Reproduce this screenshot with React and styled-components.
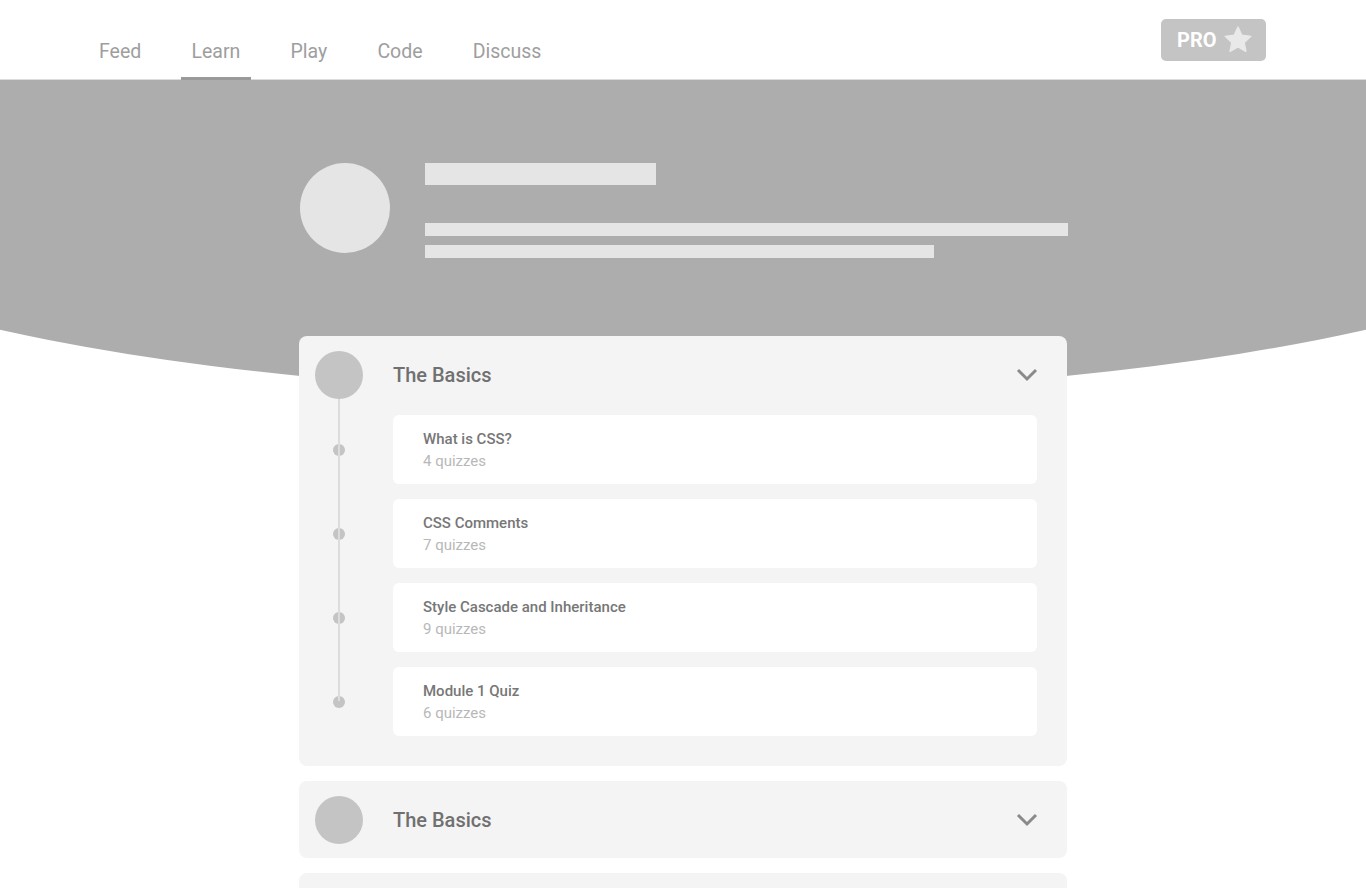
import React from "react";
import styled, { createGlobalStyle } from "styled-components";

const GlobalStyle = createGlobalStyle`
  html, body {
    margin: 0;
    padding: 0;
    background: #ffffff;
    font-family: Roboto, "Noto Sans", Arial, sans-serif;
  }
  * {
    box-sizing: border-box;
  }
`;

const navItems = ["Feed", "Learn", "Play", "Code", "Discuss"];

const lessons = [
  { title: "What is CSS?", quizzes: 4 },
  { title: "CSS Comments", quizzes: 7 },
  { title: "Style Cascade and Inheritance", quizzes: 9 },
  { title: "Module 1 Quiz", quizzes: 6 },
];

function Star() {
  return (
    <svg width="28" height="27" viewBox="0 0 24 23">
      <path
        d="M12 0.8l3.3 7.1 7.7 0.9-5.7 5.3 1.5 7.6L12 17.9l-6.8 3.8 1.5-7.6L1 8.8l7.7-0.9z"
        fill="#e9e9e9"
        strokeLinejoin="round"
        stroke="#e9e9e9"
        strokeWidth="1.2"
      />
    </svg>
  );
}

function Chevron() {
  return (
    <svg width="22" height="14" viewBox="0 0 22 14">
      <polyline
        points="2,2 11,11 20,2"
        fill="none"
        stroke="#8a8a8a"
        strokeWidth="3"
      />
    </svg>
  );
}

function Module({ title, items }) {
  return (
    <ModuleCard $open={!!items}>
      <ModuleHead>
        <ModuleIcon />
        <ModuleTitle>{title}</ModuleTitle>
        <Chevron />
      </ModuleHead>
      {items && (
        <Timeline>
          {items.map((item) => (
            <LessonRow key={item.title}>
              <DotCol>
                <Dot />
              </DotCol>
              <Lesson>
                <LessonTitle>{item.title}</LessonTitle>
                <LessonMeta>{item.quizzes} quizzes</LessonMeta>
              </Lesson>
            </LessonRow>
          ))}
        </Timeline>
      )}
    </ModuleCard>
  );
}

export default function App() {
  return (
    <Page>
      <GlobalStyle />
      <Header>
        <Nav>
          {navItems.map((n) => (
            <NavItem key={n} $active={n === "Learn"}>
              {n}
            </NavItem>
          ))}
        </Nav>
        <ProButton>
          PRO
          <Star />
        </ProButton>
      </Header>
      <Hero>
        <HeroInner>
          <Avatar />
          <HeroText>
            <Bar $w={231} $h={22} />
            <Bar $w={643} $h={13} $mt={38} />
            <Bar $w={509} $h={13} $mt={9} />
          </HeroText>
        </HeroInner>
      </Hero>
      <Content>
        <Module title="The Basics" items={lessons} />
        <Module title="The Basics" />
        <Module title="The Basics" />
      </Content>
    </Page>
  );
}

const Page = styled.div`
  width: 100%;
  overflow-x: hidden;
`;

const Header = styled.header`
  height: 80px;
  border-bottom: 1px solid #dcdcdc;
  display: flex;
  justify-content: space-between;
  align-items: flex-start;
  padding: 0 100px 0 88.5px;
`;

const Nav = styled.nav`
  display: flex;
  gap: 29.2px;
  height: 80px;
`;

const NavItem = styled.a`
  display: block;
  height: 80px;
  padding: 40px 10.5px 0;
  font-size: 19.5px;
  line-height: 24px;
  color: #9e9e9e;
  border-bottom: 3px solid ${(p) => (p.$active ? "#9a9a9a" : "transparent")};
  cursor: pointer;
`;

const ProButton = styled.button`
  margin-top: 19px;
  height: 42px;
  width: 105px;
  border: none;
  border-radius: 5px;
  background: #c4c4c4;
  color: #ffffff;
  font-family: Roboto, Arial, sans-serif;
  font-weight: 700;
  font-size: 20px;
  display: flex;
  align-items: center;
  gap: 7px;
  padding: 0 0 0 16px;
  svg {
    margin-top: -2px;
  }
`;

const Hero = styled.section`
  height: 314px;
  position: relative;
  overflow: hidden;
  &::before {
    content: "";
    position: absolute;
    left: 50%;
    bottom: 0;
    width: 2000px;
    height: 476px;
    margin-left: -1000px;
    border-radius: 50%;
    background: #adadad;
  }
`;

const HeroInner = styled.div`
  position: relative;
  width: 768px;
  margin: 0 auto;
  padding: 83px 0 0 1px;
  display: flex;
  gap: 35px;
`;

const Avatar = styled.div`
  width: 90px;
  height: 90px;
  border-radius: 50%;
  background: #e5e5e5;
  flex-shrink: 0;
`;

const HeroText = styled.div`
  display: flex;
  flex-direction: column;
`;

const Bar = styled.div`
  width: ${(p) => p.$w}px;
  height: ${(p) => p.$h}px;
  margin-top: ${(p) => p.$mt || 0}px;
  background: #e5e5e5;
`;

const Content = styled.main`
  width: 768px;
  margin: -58px auto 0;
  display: flex;
  flex-direction: column;
  gap: 15px;
  position: relative;
`;

const ModuleCard = styled.div`
  background: #f4f4f4;
  border-radius: 8px;
  padding: 15px 30px ${(p) => (p.$open ? "30px" : "14px")} 16px;
  svg {
    margin-right: -1px;
  }
`;

const ModuleHead = styled.div`
  display: flex;
  align-items: center;
  height: 48px;
`;

const ModuleIcon = styled.div`
  width: 48px;
  height: 48px;
  border-radius: 50%;
  background: #c4c4c4;
  flex-shrink: 0;
`;

const ModuleTitle = styled.h2`
  flex: 1;
  margin: 0 0 0 30px;
  font-size: 20px;
  font-weight: 500;
  color: #707070;
`;

const Timeline = styled.ul`
  list-style: none;
  margin: 16px 0 0;
  padding: 0;
  position: relative;
  display: flex;
  flex-direction: column;
  gap: 15px;
  &::before {
    content: "";
    position: absolute;
    left: 23px;
    top: -16px;
    bottom: 35px;
    width: 2px;
    background: #dcdcdc;
  }
`;

const LessonRow = styled.li`
  display: flex;
  gap: 30px;
`;

const DotCol = styled.div`
  width: 48px;
  display: flex;
  align-items: center;
  justify-content: center;
  flex-shrink: 0;
`;

const Dot = styled.span`
  width: 12px;
  height: 12px;
  border-radius: 50%;
  background: #c4c4c4;
`;

const Lesson = styled.div`
  flex: 1;
  height: 69px;
  background: #ffffff;
  border-radius: 6px;
  padding: 13px 30px 0;
`;

const LessonTitle = styled.div`
  font-size: 15px;
  line-height: 22px;
  font-weight: 500;
  color: #777777;
`;

const LessonMeta = styled.div`
  font-size: 15px;
  line-height: 23px;
  color: #b8b8b8;
`;
